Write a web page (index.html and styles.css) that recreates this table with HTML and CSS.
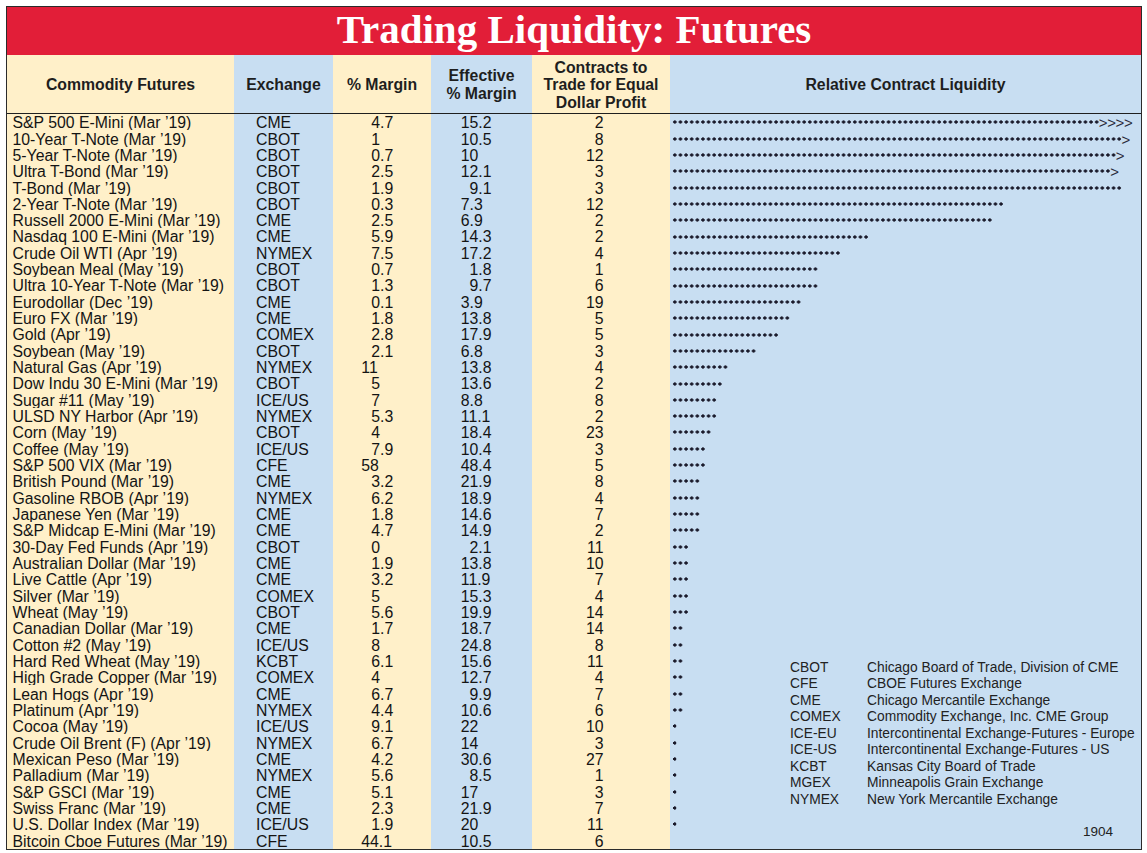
FILE: index.html
```html
<!DOCTYPE html>
<html lang="en">
<head>
<meta charset="utf-8">
<title>Trading Liquidity: Futures</title>
<link rel="stylesheet" href="styles.css">
</head>
<body>
<div class="chart">
  <h1 class="title">Trading Liquidity: Futures</h1>
  <div class="table">
    <div class="row head">
      <div class="c cream">Commodity Futures</div>
      <div class="c blue">Exchange</div>
      <div class="c cream">% Margin</div>
      <div class="c blue">Effective<br>% Margin</div>
      <div class="c cream">Contracts to<br>Trade for Equal<br>Dollar Profit</div>
      <div class="c blue">Relative Contract Liquidity</div>
    </div>

    <div class="row"><div class="c name">S&amp;P 500 E-Mini (Mar ’19)</div><div class="c ex">CME</div><div class="c mar">4.7</div><div class="c eff">15.2</div><div class="c con">2</div><div class="c liq"><span class="dots" style="--n:76"></span><span class="arr multi">&gt;&gt;&gt;&gt;</span></div></div>
    <div class="row"><div class="c name">10-Year T-Note (Mar ’19)</div><div class="c ex">CBOT</div><div class="c mar">1</div><div class="c eff">10.5</div><div class="c con">8</div><div class="c liq"><span class="dots" style="--n:80"></span><span class="arr">&gt;</span></div></div>
    <div class="row"><div class="c name">5-Year T-Note (Mar ’19)</div><div class="c ex">CBOT</div><div class="c mar">0.7</div><div class="c eff">10</div><div class="c con">12</div><div class="c liq"><span class="dots" style="--n:79"></span><span class="arr">&gt;</span></div></div>
    <div class="row"><div class="c name">Ultra T-Bond (Mar ’19)</div><div class="c ex">CBOT</div><div class="c mar">2.5</div><div class="c eff">12.1</div><div class="c con">3</div><div class="c liq"><span class="dots" style="--n:78"></span><span class="arr">&gt;</span></div></div>
    <div class="row"><div class="c name">T-Bond (Mar ’19)</div><div class="c ex">CBOT</div><div class="c mar">1.9</div><div class="c eff s">9.1</div><div class="c con">3</div><div class="c liq"><span class="dots" style="--n:80"></span></div></div>
    <div class="row"><div class="c name">2-Year T-Note (Mar ’19)</div><div class="c ex">CBOT</div><div class="c mar">0.3</div><div class="c eff">7.3</div><div class="c con">12</div><div class="c liq"><span class="dots" style="--n:59"></span></div></div>
    <div class="row"><div class="c name">Russell 2000 E-Mini (Mar ’19)</div><div class="c ex">CME</div><div class="c mar">2.5</div><div class="c eff">6.9</div><div class="c con">2</div><div class="c liq"><span class="dots" style="--n:57"></span></div></div>
    <div class="row"><div class="c name">Nasdaq 100 E-Mini (Mar ’19)</div><div class="c ex">CME</div><div class="c mar">5.9</div><div class="c eff">14.3</div><div class="c con">2</div><div class="c liq"><span class="dots" style="--n:35"></span></div></div>
    <div class="row"><div class="c name">Crude Oil WTI (Apr ’19)</div><div class="c ex">NYMEX</div><div class="c mar">7.5</div><div class="c eff">17.2</div><div class="c con">4</div><div class="c liq"><span class="dots" style="--n:30"></span></div></div>
    <div class="row"><div class="c name">Soybean Meal (May ’19)</div><div class="c ex">CBOT</div><div class="c mar">0.7</div><div class="c eff s">1.8</div><div class="c con">1</div><div class="c liq"><span class="dots" style="--n:26"></span></div></div>
    <div class="row"><div class="c name">Ultra 10-Year T-Note (Mar ’19)</div><div class="c ex">CBOT</div><div class="c mar">1.3</div><div class="c eff s">9.7</div><div class="c con">6</div><div class="c liq"><span class="dots" style="--n:26"></span></div></div>
    <div class="row"><div class="c name">Eurodollar (Dec ’19)</div><div class="c ex">CME</div><div class="c mar">0.1</div><div class="c eff">3.9</div><div class="c con">19</div><div class="c liq"><span class="dots" style="--n:23"></span></div></div>
    <div class="row"><div class="c name">Euro FX (Mar ’19)</div><div class="c ex">CME</div><div class="c mar">1.8</div><div class="c eff">13.8</div><div class="c con">5</div><div class="c liq"><span class="dots" style="--n:21"></span></div></div>
    <div class="row"><div class="c name">Gold (Apr ’19)</div><div class="c ex">COMEX</div><div class="c mar">2.8</div><div class="c eff">17.9</div><div class="c con">5</div><div class="c liq"><span class="dots" style="--n:19"></span></div></div>
    <div class="row"><div class="c name">Soybean (May ’19)</div><div class="c ex">CBOT</div><div class="c mar">2.1</div><div class="c eff">6.8</div><div class="c con">3</div><div class="c liq"><span class="dots" style="--n:15"></span></div></div>
    <div class="row"><div class="c name">Natural Gas (Apr ’19)</div><div class="c ex">NYMEX</div><div class="c mar w">11</div><div class="c eff">13.8</div><div class="c con">4</div><div class="c liq"><span class="dots" style="--n:10"></span></div></div>
    <div class="row"><div class="c name">Dow Indu 30 E-Mini (Mar ’19)</div><div class="c ex">CBOT</div><div class="c mar">5</div><div class="c eff">13.6</div><div class="c con">2</div><div class="c liq"><span class="dots" style="--n:9"></span></div></div>
    <div class="row"><div class="c name">Sugar #11 (May ’19)</div><div class="c ex">ICE/US</div><div class="c mar">7</div><div class="c eff">8.8</div><div class="c con">8</div><div class="c liq"><span class="dots" style="--n:8"></span></div></div>
    <div class="row"><div class="c name">ULSD NY Harbor (Apr ’19)</div><div class="c ex">NYMEX</div><div class="c mar">5.3</div><div class="c eff">11.1</div><div class="c con">2</div><div class="c liq"><span class="dots" style="--n:8"></span></div></div>
    <div class="row"><div class="c name">Corn (May ’19)</div><div class="c ex">CBOT</div><div class="c mar">4</div><div class="c eff">18.4</div><div class="c con">23</div><div class="c liq"><span class="dots" style="--n:7"></span></div></div>
    <div class="row"><div class="c name">Coffee (May ’19)</div><div class="c ex">ICE/US</div><div class="c mar">7.9</div><div class="c eff">10.4</div><div class="c con">3</div><div class="c liq"><span class="dots" style="--n:6"></span></div></div>
    <div class="row"><div class="c name">S&amp;P 500 VIX (Mar ’19)</div><div class="c ex">CFE</div><div class="c mar w">58</div><div class="c eff">48.4</div><div class="c con">5</div><div class="c liq"><span class="dots" style="--n:6"></span></div></div>
    <div class="row"><div class="c name">British Pound (Mar ’19)</div><div class="c ex">CME</div><div class="c mar">3.2</div><div class="c eff">21.9</div><div class="c con">8</div><div class="c liq"><span class="dots" style="--n:5"></span></div></div>
    <div class="row"><div class="c name">Gasoline RBOB (Apr ’19)</div><div class="c ex">NYMEX</div><div class="c mar">6.2</div><div class="c eff">18.9</div><div class="c con">4</div><div class="c liq"><span class="dots" style="--n:5"></span></div></div>
    <div class="row"><div class="c name">Japanese Yen (Mar ’19)</div><div class="c ex">CME</div><div class="c mar">1.8</div><div class="c eff">14.6</div><div class="c con">7</div><div class="c liq"><span class="dots" style="--n:5"></span></div></div>
    <div class="row"><div class="c name">S&amp;P Midcap E-Mini (Mar ’19)</div><div class="c ex">CME</div><div class="c mar">4.7</div><div class="c eff">14.9</div><div class="c con">2</div><div class="c liq"><span class="dots" style="--n:5"></span></div></div>
    <div class="row"><div class="c name">30-Day Fed Funds (Apr ’19)</div><div class="c ex">CBOT</div><div class="c mar">0</div><div class="c eff s">2.1</div><div class="c con">11</div><div class="c liq"><span class="dots" style="--n:3"></span></div></div>
    <div class="row"><div class="c name">Australian Dollar (Mar ’19)</div><div class="c ex">CME</div><div class="c mar">1.9</div><div class="c eff">13.8</div><div class="c con">10</div><div class="c liq"><span class="dots" style="--n:3"></span></div></div>
    <div class="row"><div class="c name">Live Cattle (Apr ’19)</div><div class="c ex">CME</div><div class="c mar">3.2</div><div class="c eff">11.9</div><div class="c con">7</div><div class="c liq"><span class="dots" style="--n:3"></span></div></div>
    <div class="row"><div class="c name">Silver (Mar ’19)</div><div class="c ex">COMEX</div><div class="c mar">5</div><div class="c eff">15.3</div><div class="c con">4</div><div class="c liq"><span class="dots" style="--n:3"></span></div></div>
    <div class="row"><div class="c name">Wheat (May ’19)</div><div class="c ex">CBOT</div><div class="c mar">5.6</div><div class="c eff">19.9</div><div class="c con">14</div><div class="c liq"><span class="dots" style="--n:3"></span></div></div>
    <div class="row"><div class="c name">Canadian Dollar (Mar ’19)</div><div class="c ex">CME</div><div class="c mar">1.7</div><div class="c eff">18.7</div><div class="c con">14</div><div class="c liq"><span class="dots" style="--n:2"></span></div></div>
    <div class="row"><div class="c name">Cotton #2 (May ’19)</div><div class="c ex">ICE/US</div><div class="c mar">8</div><div class="c eff">24.8</div><div class="c con">8</div><div class="c liq"><span class="dots" style="--n:2"></span></div></div>
    <div class="row"><div class="c name">Hard Red Wheat (May ’19)</div><div class="c ex">KCBT</div><div class="c mar">6.1</div><div class="c eff">15.6</div><div class="c con">11</div><div class="c liq"><span class="dots" style="--n:2"></span></div></div>
    <div class="row"><div class="c name">High Grade Copper (Mar ’19)</div><div class="c ex">COMEX</div><div class="c mar">4</div><div class="c eff">12.7</div><div class="c con">4</div><div class="c liq"><span class="dots" style="--n:2"></span></div></div>
    <div class="row"><div class="c name">Lean Hogs (Apr ’19)</div><div class="c ex">CME</div><div class="c mar">6.7</div><div class="c eff s">9.9</div><div class="c con">7</div><div class="c liq"><span class="dots" style="--n:2"></span></div></div>
    <div class="row"><div class="c name">Platinum (Apr ’19)</div><div class="c ex">NYMEX</div><div class="c mar">4.4</div><div class="c eff">10.6</div><div class="c con">6</div><div class="c liq"><span class="dots" style="--n:2"></span></div></div>
    <div class="row"><div class="c name">Cocoa (May ’19)</div><div class="c ex">ICE/US</div><div class="c mar">9.1</div><div class="c eff">22</div><div class="c con">10</div><div class="c liq"><span class="dots" style="--n:1"></span></div></div>
    <div class="row"><div class="c name">Crude Oil Brent (F) (Apr ’19)</div><div class="c ex">NYMEX</div><div class="c mar">6.7</div><div class="c eff">14</div><div class="c con">3</div><div class="c liq"><span class="dots" style="--n:1"></span></div></div>
    <div class="row"><div class="c name">Mexican Peso (Mar ’19)</div><div class="c ex">CME</div><div class="c mar">4.2</div><div class="c eff">30.6</div><div class="c con">27</div><div class="c liq"><span class="dots" style="--n:1"></span></div></div>
    <div class="row"><div class="c name">Palladium (Mar ’19)</div><div class="c ex">NYMEX</div><div class="c mar">5.6</div><div class="c eff s">8.5</div><div class="c con">1</div><div class="c liq"><span class="dots" style="--n:1"></span></div></div>
    <div class="row"><div class="c name">S&amp;P GSCI (Mar ’19)</div><div class="c ex">CME</div><div class="c mar">5.1</div><div class="c eff">17</div><div class="c con">3</div><div class="c liq"><span class="dots" style="--n:1"></span></div></div>
    <div class="row"><div class="c name">Swiss Franc (Mar ’19)</div><div class="c ex">CME</div><div class="c mar">2.3</div><div class="c eff">21.9</div><div class="c con">7</div><div class="c liq"><span class="dots" style="--n:1"></span></div></div>
    <div class="row"><div class="c name">U.S. Dollar Index (Mar ’19)</div><div class="c ex">ICE/US</div><div class="c mar">1.9</div><div class="c eff">20</div><div class="c con">11</div><div class="c liq"><span class="dots" style="--n:1"></span></div></div>
    <div class="row"><div class="c name">Bitcoin Cboe Futures (Mar ’19)</div><div class="c ex">CFE</div><div class="c mar w">44.1</div><div class="c eff">10.5</div><div class="c con">6</div><div class="c liq"></div></div>
  </div>

  <div class="legend">
    <dl class="codes">
      <dt>CBOT</dt><dd>Chicago Board of Trade, Division of CME</dd>
      <dt>CFE</dt><dd>CBOE Futures Exchange</dd>
      <dt>CME</dt><dd>Chicago Mercantile Exchange</dd>
      <dt>COMEX</dt><dd>Commodity Exchange, Inc. CME Group</dd>
      <dt>ICE-EU</dt><dd>Intercontinental Exchange-Futures - Europe</dd>
      <dt>ICE-US</dt><dd>Intercontinental Exchange-Futures - US</dd>
      <dt>KCBT</dt><dd>Kansas City Board of Trade</dd>
      <dt>MGEX</dt><dd>Minneapolis Grain Exchange</dd>
      <dt>NYMEX</dt><dd>New York Mercantile Exchange</dd>
    </dl>
    <div class="issue">1904</div>
  </div>
</div>
</body>
</html>
```

FILE: styles.css
```css
html, body {
  margin: 0;
  padding: 0;
  background: #ffffff;
}

body {
  font-family: "Liberation Sans", Arial, sans-serif;
  color: #141414;
}

.chart {
  position: relative;
  width: 1134px;
  margin: 6px 0 0 6px;
  border: 1px solid #2b2b2b;
}

.title {
  margin: 0;
  height: 48px;
  box-sizing: border-box;
  padding-bottom: 3px;
  background: #e21e38;
  color: #ffffff;
  font-family: "Liberation Serif", "Times New Roman", serif;
  font-weight: bold;
  font-size: 41px;
  line-height: 45px;
  text-align: center;
}

.row {
  display: grid;
  grid-template-columns: 227px 99px 98px 101px 138px 1fr;
  height: 16.333px;
  box-sizing: border-box;
  border-bottom: 1px solid #ffffff;
  font-size: 15.8px;
  line-height: 15.333px;
}

.row:last-child {
  border-bottom: 0;
}

.row.head {
  height: 59px;
  border-bottom: 1px solid #1f1f1f;
  font-weight: bold;
  font-size: 15.8px;
  line-height: 17.6px;
  color: #1e1e1e;
}

.head .c {
  display: flex;
  align-items: center;
  justify-content: center;
  text-align: center;
  padding-top: 2px;
  box-sizing: border-box;
}

.c {
  white-space: nowrap;
}

.cream,
.name,
.mar,
.con {
  background: #fff0c9;
}

.blue,
.ex,
.eff,
.liq {
  background: #c8def2;
}

.row:not(.head) .c {
  padding-top: 1.2px;
  box-sizing: border-box;
}

.name {
  padding-left: 5.5px;
}

.ex {
  padding-left: 22px;
}

.mar {
  padding-left: 38.3px;
}

.mar.w {
  padding-left: 28.3px;
}

.eff {
  padding-left: 29.8px;
}

.eff.s {
  padding-left: 38.5px;
}

.con {
  text-align: right;
  padding-right: 66.5px;
}

.row:not(.head) .liq {
  display: flex;
  align-items: center;
  padding-left: 1.7px;
  padding-top: 0;
}

.dots {
  display: block;
  flex: none;
  width: calc(var(--n) * 5.634px);
  height: 4px;
  background-image: radial-gradient(circle at center, #19192a 1.4px, rgba(25, 25, 42, 0) 1.85px);
  background-size: 5.634px 4px;
  background-repeat: repeat-x;
}

.arr {
  display: block;
  flex: none;
  margin-left: -1px;
  margin-top: 2px;
  font-size: 15px;
  line-height: 14px;
  color: #2a2a3a;
}

.arr.multi {
  letter-spacing: -0.4px;
}

.legend {
  position: absolute;
  left: 777px;
  top: 647px;
  right: 0;
  bottom: 0;
  box-sizing: border-box;
  padding: 6px 28px 8px 6px;
  background: #c8def2;
  display: flex;
  flex-direction: column;
  font-size: 13.8px;
  line-height: 16.45px;
  color: #222222;
}

.codes {
  margin: 0;
  display: grid;
  grid-template-columns: 77px 1fr;
}

.codes dt,
.codes dd {
  margin: 0;
  white-space: nowrap;
}

.issue {
  margin-top: auto;
  text-align: right;
  font-size: 13.5px;
}
```
